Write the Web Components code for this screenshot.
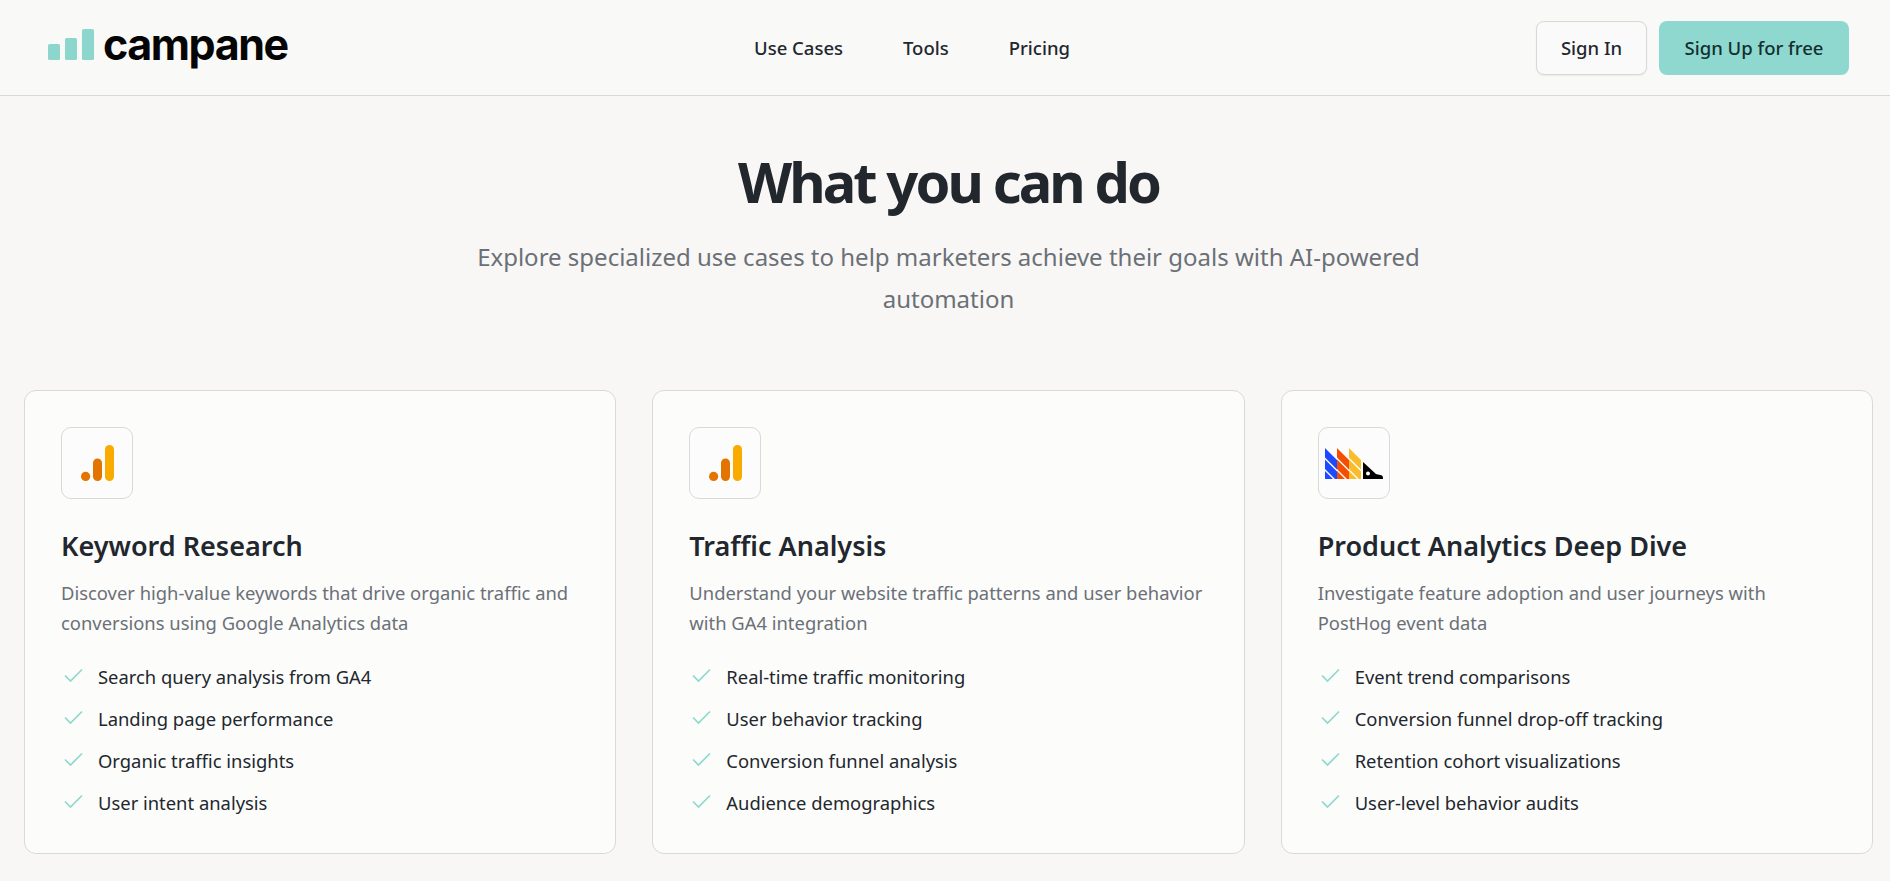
<!DOCTYPE html>
<html lang="en">
<head>
<meta charset="utf-8">
<title>Campane</title>
<style>
  html, body { margin: 0; padding: 0; background: #f8f7f5; height: 881px; overflow: hidden; }
  body { font-family: "Noto Sans", "Open Sans", sans-serif; color: #22272e; }
</style>
</head>
<body>
<site-header></site-header>
<section-intro heading="What you can do">Explore specialized use cases to help marketers achieve their goals with AI-powered automation</section-intro>
<card-grid>
  <use-case-card heading="Keyword Research" text="Discover high-value keywords that drive organic traffic and conversions using Google Analytics data" items="Search query analysis from GA4|Landing page performance|Organic traffic insights|User intent analysis">
    <ga-icon></ga-icon>
  </use-case-card>
  <use-case-card heading="Traffic Analysis" text="Understand your website traffic patterns and user behavior with GA4 integration" items="Real-time traffic monitoring|User behavior tracking|Conversion funnel analysis|Audience demographics">
    <ga-icon></ga-icon>
  </use-case-card>
  <use-case-card heading="Product Analytics Deep Dive" text="Investigate feature adoption and user journeys with PostHog event data" items="Event trend comparisons|Conversion funnel drop-off tracking|Retention cohort visualizations|User-level behavior audits">
    <posthog-icon></posthog-icon>
  </use-case-card>
</card-grid>

<script>
// small helper so every element below stays short
function shadow(el, html) {
  el.attachShadow({ mode: 'open' }).innerHTML = html;
}

class SiteHeader extends HTMLElement {
  connectedCallback() {
    shadow(this, `
      <style>
        :host { display: flex; justify-content: space-between; align-items: center; height: 95px; padding: 0 41px 0 48px; background: #f9f9f8; border-bottom: 1px solid #d9d9d7; }
        .logo { display: flex; align-items: center; gap: 9px; width: 240px; }
        .logo svg { display: block; flex: none; margin-top: -7px; }
        .word { font: 700 43px/1 Inter, sans-serif; letter-spacing: -1.45px; color: #050505; margin-top: -7px; }
        nav { display: flex; gap: 60px; font-size: 18.5px; font-weight: 500; }
        .actions { display: flex; gap: 12px; }
        .btn { box-sizing: border-box; height: 54px; display: flex; align-items: center; justify-content: center; border-radius: 8px; font-size: 18.5px; font-weight: 500; }
        .in { width: 111px; background: #fbfafa; border: 1px solid #d8d8d6; box-shadow: 0 1px 2px rgba(0,0,0,.06); }
        .up { width: 190px; background: #8fd8cf; color: #12312f; }
      </style>
      <div class="logo">
        <svg width="46" height="31" viewBox="0 0 46 31" fill="#8dd6cd">
          <rect x="0" y="15" width="12" height="16" rx="1.5"/>
          <rect x="17" y="9" width="12" height="22" rx="1.5"/>
          <rect x="34" y="0" width="12" height="31" rx="1.5"/>
        </svg>
        <span class="word">campane</span>
      </div>
      <nav><span>Use Cases</span><span>Tools</span><span>Pricing</span></nav>
      <div class="actions"><span class="btn in">Sign In</span><span class="btn up">Sign Up for free</span></div>
    `);
  }
}

class SectionIntro extends HTMLElement {
  connectedCallback() {
    shadow(this, `
      <style>
        :host { display: block; text-align: center; padding: 52px 0 0 7px; }
        h1 { margin: 0; font-size: 56px; line-height: 66px; font-weight: 700; letter-spacing: -2.9px; color: #22272e; }
        p { margin: 22px auto 0; width: 960px; font-size: 24px; line-height: 42px; color: #6b7077; }
      </style>
      <h1>${this.getAttribute('heading')}</h1>
      <p><slot></slot></p>
    `);
  }
}

class CardGrid extends HTMLElement {
  connectedCallback() {
    shadow(this, `
      <style>
        :host { display: grid; grid-template-columns: repeat(3, 1fr); gap: 36px; padding: 0 17px 0 24px; margin-top: 70px; }
      </style>
      <slot></slot>
    `);
  }
}

class UseCaseCard extends HTMLElement {
  connectedCallback() {
    const items = this.getAttribute('items').split('|')
      .map(t => `<li><svg width="22" height="20" viewBox="0 0 22 20" fill="none" stroke="#8fd8cf" stroke-width="1.7"><path d="M4 10.500l5.500 5.500L21 4.500"/></svg>${t}</li>`)
      .join('');
    shadow(this, `
      <style>
        :host { display: block; box-sizing: border-box; height: 464px; padding: 36px; background: #fcfcfb; border: 1px solid #d9d9d7; border-radius: 12px; }
        .icon { box-sizing: border-box; width: 72px; height: 72px; display: flex; align-items: center; justify-content: center; border: 1px solid #d9d9d7; border-radius: 10px; background: #fdfcfc; }
        h3 { margin: 27px 0 0; font-size: 27px; line-height: 40px; font-weight: 600; color: #22272e; }
        p { margin: 12px 0 0; font-size: 18.4px; line-height: 30px; color: #6b7077; }
        ul { list-style: none; margin: 17px 0 0; padding: 0; }
        li { display: flex; align-items: center; gap: 15px; height: 42px; font-size: 18.4px; color: #22272e; }
        li svg { flex: none; margin-top: -2px; }
      </style>
      <div class="icon"><slot></slot></div>
      <h3>${this.getAttribute('heading')}</h3>
      <p>${this.getAttribute('text')}</p>
      <ul>${items}</ul>
    `);
  }
}

class GaIcon extends HTMLElement {
  connectedCallback() {
    shadow(this, `
      <style>:host { display: block; line-height: 0; }</style>
      <svg width="33" height="36" viewBox="0 0 33 36">
        <circle cx="4.600" cy="31.400" r="4.600" fill="#e37400"/>
        <rect x="12" y="13.500" width="9" height="22.500" rx="4.500" fill="#e37400"/>
        <rect x="24" y="0" width="9" height="36" rx="4.500" fill="#f9ab00"/>
      </svg>
    `);
  }
}

class PosthogIcon extends HTMLElement {
  connectedCallback() {
    // three striped columns, same shape shifted 12px each
    const stripes = 'M0 0l12 12v9.500L0 9.500zM0 11.500l12 12V31h-2L0 21zM0 23l8 8H0z';
    shadow(this, `
      <style>:host { display: block; line-height: 0; }</style>
      <svg width="58" height="31" viewBox="0 0 58 31">
        <path fill="#1d4aff" d="${stripes}"/>
        <path fill="#f54e00" transform="translate(12)" d="${stripes}"/>
        <path fill="#f9bd2b" transform="translate(24)" d="${stripes}"/>
        <path fill="#000" d="M38 14l13 12c2 1 7 0 7 4v1H38z"/>
        <circle cx="43" cy="25.500" r="2" fill="#fff"/>
      </svg>
    `);
  }
}

customElements.define('site-header', SiteHeader);
customElements.define('section-intro', SectionIntro);
customElements.define('card-grid', CardGrid);
customElements.define('use-case-card', UseCaseCard);
customElements.define('ga-icon', GaIcon);
customElements.define('posthog-icon', PosthogIcon);
</script>
</body>
</html>
